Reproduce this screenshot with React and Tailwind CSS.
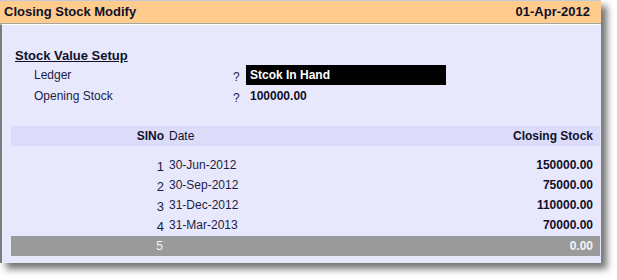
import React from "react";

const rows = [
  { no: 1, date: "30-Jun-2012", value: "150000.00" },
  { no: 2, date: "30-Sep-2012", value: "75000.00" },
  { no: 3, date: "31-Dec-2012", value: "110000.00" },
  { no: 4, date: "31-Mar-2013", value: "70000.00" },
];

const App = () => {
  return (
    <div className="bg-white w-[617px] h-[280px] font-['Liberation_Sans',Arial,sans-serif]">
      <div className="w-[601px] h-[263px] flex flex-col bg-[#e8e8fc] shadow-[6px_6px_7px_rgba(0,0,0,0.55)]">
        {/* title bar */}
        <div className="h-[24px] shrink-0 border-t border-[#c4c8d8] border-b border-b-[#a4a4a4] bg-[#ffcc8e] flex items-center justify-between pl-[4px] pr-[11px]">
          <span className="text-[13px] font-bold text-[#10102a]">Closing Stock Modify</span>
          <span className="text-[13px] font-bold text-[#10102a]">01-Apr-2012</span>
        </div>

        <div className="flex-1 border-l-2 border-[#7c7c7c] border-t border-t-white pl-[9px] pr-px pt-[23px]">
          <div className="pl-[4px]">
            <div className="text-[13px] leading-[15px] font-bold underline text-[#10102a]">Stock Value Setup</div>
            <div className="mt-[2px] flex items-center h-[20px]">
              <span className="w-[218px] pl-[19px] text-[12px] text-[#1c1c48]">Ledger</span>
              <span className="w-[13px] text-[12px] text-[#1c1c48] pt-[3px]">?</span>
              <span className="w-[200px] h-[20px] bg-black text-white text-[12px] font-bold flex items-center pl-[4px]">Stcok In Hand</span>
            </div>
            <div className="mt-px flex items-center h-[20px]">
              <span className="w-[218px] pl-[19px] text-[12px] text-[#1c1c48]">Opening Stock</span>
              <span className="w-[13px] text-[12px] text-[#1c1c48] pt-[3px]">?</span>
              <span className="text-[12px] font-bold text-[#10102a] pl-[4px]">100000.00</span>
            </div>
          </div>

          {/* table */}
          <div className="mt-[20px]">
            <div className="h-[20px] bg-[#dcdcfa] flex items-center text-[12px] text-[#10102a]">
              <span className="w-[153px] text-right font-bold">SlNo</span>
              <span className="ml-[5px] flex-1">Date</span>
              <span className="pr-[7px] font-bold">Closing Stock</span>
            </div>
            <div className="mt-[9px]">
              {rows.map((r) => (
                <div key={r.no} className="h-[20px] flex items-center text-[12px] text-[#1c1c48]">
                  <span className="w-[153px] text-right text-[13px] pt-[3px]">{r.no}</span>
                  <span className="ml-[5px] flex-1">{r.date}</span>
                  <span className="pr-[7px] font-bold text-[#10102a]">{r.value}</span>
                </div>
              ))}
            </div>
            <div className="mt-px h-[20px] bg-[#9a9a9a] flex items-center text-[12px] text-[#f4f4f4]">
              <span className="w-[153px] text-right pr-[1px]">5</span>
              <span className="ml-[5px] flex-1"></span>
              <span className="pr-[7px] font-bold">0.00</span>
            </div>
          </div>
        </div>
      </div>
    </div>
  );
};

export default App;
